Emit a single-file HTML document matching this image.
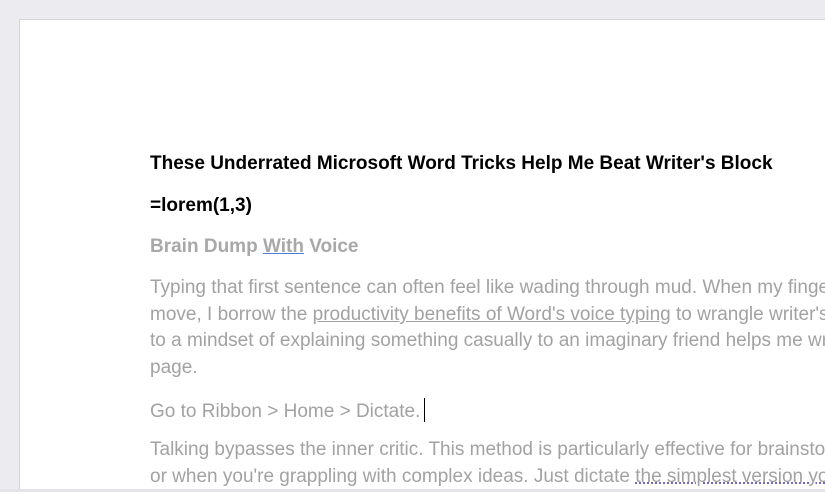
<!DOCTYPE html>
<html><head><style>
html,body{margin:0;padding:0;width:825px;height:492px;overflow:hidden;background:#ecebef;font-family:"Liberation Sans",sans-serif;}
.page{position:absolute;left:19px;top:19px;width:820px;height:470px;background:#fff;border:1px solid #d4d3d8;}
.bot{position:absolute;left:0;top:489px;width:825px;height:3px;background:#e4e3e7;}
.clip{position:absolute;left:0;top:0;width:825px;height:489px;overflow:hidden;}
.l{position:absolute;left:150px;white-space:nowrap;font-size:19px;line-height:22px;color:#a2a2a2;}
.b{font-weight:bold;color:#000;font-size:19px;}
.h{font-weight:bold;color:#a8a8a8;font-size:19px;}
u{text-decoration-color:#a0a0a0;}
.blue{text-decoration-color:#4a7fd0;color:#a8a8a8;}
.dot{text-decoration:underline dotted #6b5fc0;}
.cur{display:inline-block;width:1px;height:24px;background:#000;vertical-align:-5px;margin-left:4px;}
</style></head><body>
<div class="page"></div>
<div class="bot"></div>
<div class="clip">
<div class="l b" style="top:153px">These Underrated Microsoft Word Tricks Help Me Beat Writer's Block</div>
<div class="l b" style="top:195px">=lorem(1,3)</div>
<div class="l h" style="top:236px">Brain Dump <u class="blue">With</u> Voice</div>
<div class="l" style="top:277px">Typing that first sentence can often feel like wading through mud. When my fingers won't</div>
<div class="l" style="top:304px">move, I borrow the <u>productivity benefits of Word's voice typing</u> to wrangle writer's block.</div>
<div class="l" style="top:330px">to a mindset of explaining something casually to an imaginary friend helps me write.</div>
<div class="l" style="top:357px">page.</div>
<div class="l" style="top:398px">Go to Ribbon &gt; Home &gt; Dictate.<span class="cur"></span></div>
<div class="l" style="top:439px">Talking bypasses the inner critic. This method is particularly effective for brainstorming</div>
<div class="l" style="top:466px">or when you're grappling with complex ideas. Just dictate <span class="dot">the simplest version you</span></div>
</div>
</body></html>
